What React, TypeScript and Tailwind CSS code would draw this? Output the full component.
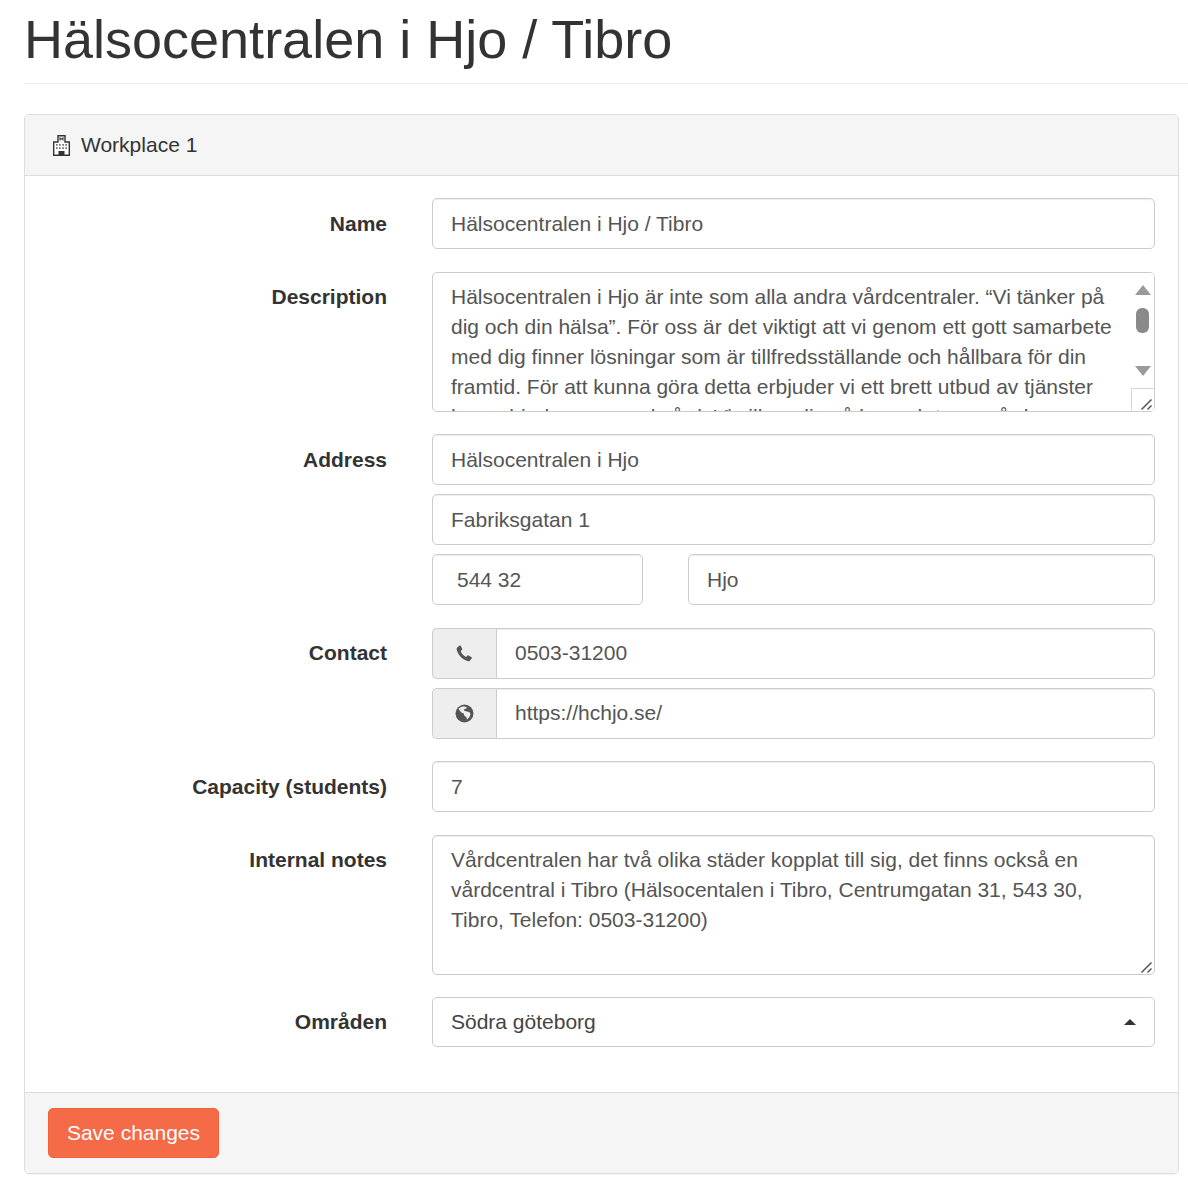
const inputClass =
  "block w-full h-[51px] rounded-[5px] border border-[#cccccc] bg-white px-[18px] text-[21px] text-[#555555] shadow-[inset_0_1px_1px_rgba(0,0,0,0.075)] outline-none";

const Field: React.FC<{
  label: string;
  children: React.ReactNode;
  className?: string;
  labelClass?: string;
}> = ({ label, children, className, labelClass }) => {
  return (
    <div className={`flex ${className ?? ""}`}>
      <label
        className={`w-[362px] shrink-0 text-right text-[21px] font-bold leading-[30px] text-[#333333] ${labelClass ?? "pt-[11px]"}`}
      >
        {label}
      </label>
      <div className="ml-[45px] flex w-[723px] flex-col gap-[9px]">{children}</div>
    </div>
  );
};

const HospitalIcon = () => (
  <svg width="17" height="21" viewBox="0 0 17 21" className="shrink-0">
    <path d="M5 7V.8h7V7h4.300v13.300H.7V7z" fill="#ffffff" stroke="#333333" strokeWidth="1.400" />
    <path d="M7 2.200v3.400M10 2.200v3.400M7 3.900h3" stroke="#333333" strokeWidth="1.100" fill="none" />
    <path
      d="M3 9h1.700v1.700H3zM6 9h1.700v1.700H6zM9.300 9H11v1.700H9.300zM12.300 9H14v1.700h-1.700zM3 12.300h1.700V14H3zM6 12.300h1.700V14H6zM9.300 12.300H11V14H9.300zM12.300 12.300H14V14h-1.700z"
      fill="#777777"
    />
    <path d="M5.500 16h6v4.500h-6z" fill="#333333" />
  </svg>
);

const PhoneIcon = () => (
  <svg width="17" height="17" viewBox="0 0 17 17">
    <path
      d="M1.200 2.600 3.600.6c.4-.3.9-.2 1.100.2l1.500 3c.2.4.1.7-.2 1L4.800 5.900c.6 2.600 2.800 5 5.400 6l1.300-1.300c.3-.3.7-.3 1-.1l3.100 1.700c.4.2.5.7.2 1.100l-2 2.400c-.4.4-.9.6-1.500.5C6.300 15 1.700 10 .6 4.100c-.1-.6.1-1.100.6-1.500z"
      fill="#555555"
    />
  </svg>
);

const GlobeIcon = () => (
  <svg width="19" height="19" viewBox="0 0 19 19">
    <circle cx="9.500" cy="9.500" r="9" fill="#555555" />
    <path
      d="M3.500 4.500 6 3l3-.8 3 1.200-1 1.400-1.700.2-.3 1.500 1.800.8 3.500.6 1.300 2.300-1.300 3-2.300 2.200-.8-2.500-2-1.300-.5-2.200-2.700-1.200-1.700-2.200z"
      fill="#eeeeee"
    />
  </svg>
);

const ResizeGrip = () => (
  <svg width="14" height="14" viewBox="0 0 14 14" className="absolute right-[1px] bottom-0">
    <path d="M2.500 12.500 12.500 2.500M8.500 12.500 12.500 8.500" stroke="#555555" strokeWidth="1.500" fill="none" />
  </svg>
);

const AddonInput: React.FC<{ icon: React.ReactNode; value: string }> = ({ icon, value }) => (
  <div className="flex h-[51px] w-full">
    <span className="flex w-[64px] items-center justify-center rounded-l-[5px] border border-r-0 border-[#cccccc] bg-[#eeeeee]">
      {icon}
    </span>
    <input
      readOnly
      value={value}
      className="h-[51px] min-w-0 flex-1 rounded-r-[5px] border border-[#cccccc] bg-white px-[18px] pb-[2px] text-[21px] text-[#555555] shadow-[inset_0_1px_1px_rgba(0,0,0,0.075)] outline-none"
    />
  </div>
);

export default function App() {
  return (
    <div className="min-h-[1187px] bg-white pl-[24px] font-['Liberation_Sans',Arial,sans-serif]">
      <div className="border-b border-[#eeeeee] pb-[4px]">
        <h1 className="text-[54px] leading-[79px] font-normal text-[#333333]">
          Hälsocentralen i Hjo / Tibro
        </h1>
      </div>

      <div className="mt-[30px] mr-[9px] overflow-hidden rounded-[5px] border border-[#dddddd] shadow-[0_1px_1px_rgba(0,0,0,0.05)]">
        <div className="flex h-[61px] items-center gap-[11px] border-b border-[#dddddd] bg-[#f5f5f5] pl-[28px]">
          <HospitalIcon />
          <span className="text-[21px] text-[#333333]">Workplace 1</span>
        </div>

        <div className="flex flex-col pt-[22px] pb-[45px]">
          <Field label="Name">
            <input readOnly value="Hälsocentralen i Hjo / Tibro" className={inputClass} />
          </Field>

          <Field label="Description" className="mt-[23px]" labelClass="pt-[10px]">
            <div className="relative h-[140px] overflow-hidden rounded-[5px] border border-[#cccccc] bg-white">
              <p className="w-[698px] px-[18px] py-[9px] text-[21px] leading-[30px] text-[#555555]">
                Hälsocentralen i Hjo är inte som alla andra vårdcentraler. “Vi tänker på dig och din hälsa”.
                För oss är det viktigt att vi genom ett gott samarbete med dig finner lösningar som är
                tillfredsställande och hållbara för din framtid. För att kunna göra detta erbjuder vi ett
                brett utbud av tjänster kan erbjuda er en god vård. Vi vill ge dig så bra och trygg vård
                som möjligt.
              </p>
              <div className="absolute top-0 right-0 bottom-0 flex w-[23px] flex-col items-center bg-white">
                <div className="mt-[12px] h-0 w-0 border-x-[8px] border-b-[10px] border-x-transparent border-b-[#9a9a9a]" />
                <div className="mt-[13px] h-[25px] w-[13px] rounded-[6px] bg-[#8a8a8a]" />
                <div className="mt-[33px] h-0 w-0 border-x-[8px] border-t-[10px] border-x-transparent border-t-[#9a9a9a]" />
              </div>
              <div className="absolute right-0 bottom-0 h-[23px] w-[23px] border-t border-l border-[#d8d8d8] bg-white">
                <ResizeGrip />
              </div>
            </div>
          </Field>

          <Field label="Address" className="mt-[22px]">
            <input readOnly value="Hälsocentralen i Hjo" className={inputClass} />
            <input readOnly value="Fabriksgatan 1" className={inputClass} />
            <div className="flex gap-[45px]">
              <input
                readOnly
                value="544 32"
                className="block h-[51px] w-[211px] shrink-0 rounded-[5px] border border-[#cccccc] bg-white px-[24px] text-[21px] text-[#555555] shadow-[inset_0_1px_1px_rgba(0,0,0,0.075)] outline-none"
              />
              <input readOnly value="Hjo" className={inputClass} />
            </div>
          </Field>

          <Field label="Contact" className="mt-[23px]" labelClass="pt-[10px]">
            <AddonInput icon={<PhoneIcon />} value="0503-31200" />
            <AddonInput icon={<GlobeIcon />} value="https://hchjo.se/" />
          </Field>

          <Field label="Capacity (students)" className="mt-[22px]">
            <input readOnly value="7" className={inputClass} />
          </Field>

          <Field label="Internal notes" className="mt-[23px]" labelClass="pt-[10px]">
            <div className="relative h-[140px] rounded-[5px] border border-[#cccccc] bg-white px-[18px] py-[9px] text-[21px] leading-[30px] text-[#555555] shadow-[inset_0_1px_1px_rgba(0,0,0,0.075)]">
              <p>
                Vårdcentralen har två olika städer kopplat till sig, det finns också en vårdcentral i Tibro
                (Hälsocentalen i Tibro, Centrumgatan 31, 543 30, Tibro, Telefon: 0503-31200)
              </p>
              <ResizeGrip />
            </div>
          </Field>

          <Field label="Områden" className="mt-[22px]" labelClass="pt-[10px]">
            <div className="flex h-[50px] items-center justify-between rounded-[5px] border border-[#cccccc] bg-white pr-[18px] pl-[18px] text-[21px] text-[#444444]">
              <span>Södra göteborg</span>
              <span className="h-0 w-0 border-x-[6px] border-b-[6px] border-x-transparent border-b-[#333333]" />
            </div>
          </Field>
        </div>

        <div className="border-t border-[#dddddd] bg-[#f5f5f5] px-[23px] pt-[15px] pb-[15px]">
          <button
            type="button"
            className="h-[50px] w-[171px] rounded-[5px] border border-[#f4623a] bg-[#f56a47] text-[21px] text-white"
          >
            Save changes
          </button>
        </div>
      </div>
    </div>
  );
}
